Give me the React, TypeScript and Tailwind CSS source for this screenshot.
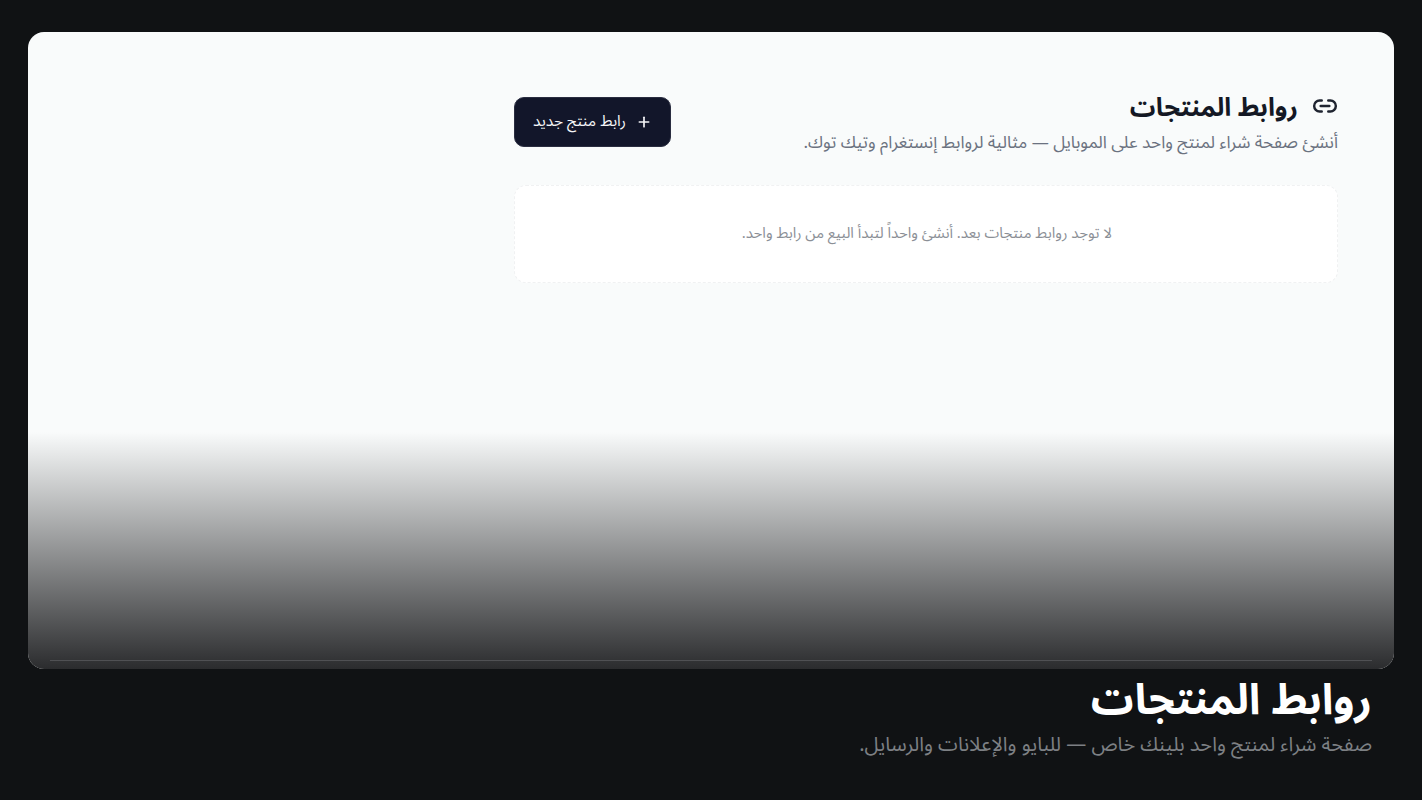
import { Link2, Plus } from 'lucide-react'

const font = { fontFamily: '"Noto Sans", "Noto Sans Arabic", "DejaVu Sans", sans-serif' }

const App = () => {
  return (
    <div dir="rtl" style={font} className="h-[800px] w-[1422px] overflow-hidden bg-[#101214] pt-8 px-7">
      <div className="relative h-[637px] overflow-hidden rounded-2xl bg-[#f9fbfb] pt-[65px] pr-14">
        <div className="w-[824px]">
          <div className="flex items-start justify-between">
            <div>
              <div className="-mt-1 flex items-center gap-3.5">
                <Link2 className="h-[26px] w-[26px] text-[#1f2430]" strokeWidth={2.25} />
                <h1 className="text-[25.5px] font-bold leading-[20px] text-[#141824]">روابط المنتجات</h1>
              </div>
              <p className="mt-[11px] text-[17.1px] leading-6 text-[#6b7280]">
                أنشئ صفحة شراء لمنتج واحد على الموبايل — مثالية لروابط إنستغرام وتيك توك.
              </p>
            </div>
            <button className="flex h-[50px] w-[157px] items-center justify-center gap-2.5 rounded-[10px] border border-[#2a2d40] bg-[#12162a] text-[15.4px] text-[#f4f5f7]">
              <Plus className="h-4 w-4" strokeWidth={2.5} />
              <span className="-mt-0.5">رابط منتج جديد</span>
            </button>
          </div>
          <div className="mt-[31px] flex h-[98px] items-center rounded-xl border border-dashed border-[#f0f1f2] bg-white pb-1 pr-[225px] text-[14.9px] text-[#8b8f96]">
            لا توجد روابط منتجات بعد. أنشئ واحداً لتبدأ البيع من رابط واحد.
          </div>
        </div>
        <div className="absolute inset-x-0 bottom-0 h-[237px] bg-gradient-to-b from-[#2b2c2e00] to-[#2b2c2e]" />
        <div className="absolute bottom-2 left-[22px] right-[22px] h-px bg-[#505154]" />
      </div>
      <div className="pr-[22px] pt-1">
        <h2 className="text-[42.6px] font-bold leading-[48px] text-white">روابط المنتجات</h2>
        <p className="mt-[9px] text-xl leading-7 text-[#7d8084]">
          صفحة شراء لمنتج واحد بلينك خاص — للبايو والإعلانات والرسايل.
        </p>
      </div>
    </div>
  )
}

export default App
